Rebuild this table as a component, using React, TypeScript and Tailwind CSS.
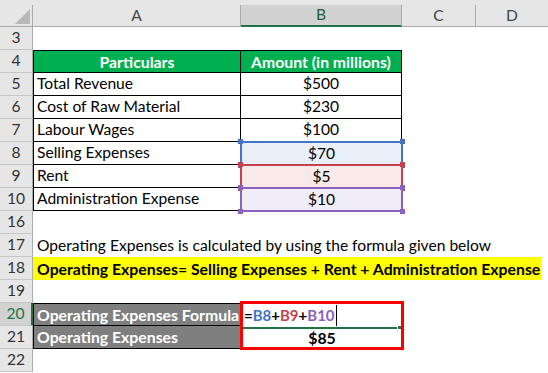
import React from 'react'

// rows shown in the sheet (11-15 are hidden)
const ROWS = [3, 4, 5, 6, 7, 8, 9, 10, 16, 17, 18, 19, 20, 21, 22]

const items = [
  { label: 'Total Revenue', value: '$500' },
  { label: 'Cost of Raw Material', value: '$230' },
  { label: 'Labour Wages', value: '$100' },
]

function Handle({ color, pos }: { color: string; pos: string }) {
  return <span className={`absolute w-[5px] h-[5px] ${pos}`} style={{ background: color }} />
}

// formula reference highlight on a B cell
function RefCell({ value, fill, stroke }: { value: string; fill: string; stroke: string }) {
  return (
    <div
      className="relative flex items-center justify-center outline-2 -outline-offset-1"
      style={{ background: fill, outlineColor: stroke }}
    >
      {value}
      <Handle color={stroke} pos="-top-[3px] -left-[3px]" />
      <Handle color={stroke} pos="-top-[3px] -right-[3px]" />
      <Handle color={stroke} pos="-bottom-[3px] -left-[3px]" />
      <Handle color={stroke} pos="-bottom-[3px] -right-[3px]" />
    </div>
  )
}

export default function App() {
  return (
    <div className="w-[548px] h-[373px] overflow-hidden bg-white font-[Lato,sans-serif] text-[15.6px] text-black leading-none">
      <div className="grid grid-cols-[33px_208px_161px_74px_72px] grid-rows-[27px_repeat(15,23px)]">
        {/* column headers */}
        <div className="bg-[#e6e6e6] border-b border-[#ababab] pt-[5px]">
          <div className="relative h-full border-r border-[#ababab]">
            <svg className="absolute left-[15px] top-[4px]" width="16" height="16" viewBox="0 0 16 16">
              <polygon points="15,0 15,15 0,15" fill="#b8b8b8" />
            </svg>
          </div>
        </div>
        <div className="bg-[#e6e6e6] border-b border-[#ababab] pt-[5px]">
          <div className="h-full border-r border-[#ababab] flex items-center justify-center text-[#444]">A</div>
        </div>
        <div className="bg-[#e6e6e6] pt-[5px]">
          <div className="h-full bg-[#d2d2d2] border-b-2 border-[#217346] border-r border-r-[#ababab] flex items-center justify-center text-[#1e5e3c]">
            B
          </div>
        </div>
        <div className="bg-[#e6e6e6] border-b border-[#ababab] pt-[5px]">
          <div className="h-full border-r border-[#ababab] flex items-center justify-center text-[#444]">C</div>
        </div>
        <div className="bg-[#e6e6e6] border-b border-[#ababab] pt-[5px]">
          <div className="h-full flex items-center justify-center text-[#444]">D</div>
        </div>

        {/* row headers */}
        {ROWS.map((n, i) => (
          <div
            key={n}
            style={{ gridRow: i + 2, gridColumn: 1 }}
            className={
              n === 20
                ? 'bg-[#d2d2d2] border-b border-[#c6c6c6] border-r-2 border-r-[#217346] flex items-center justify-center text-[#217346]'
                : 'bg-[#e6e6e6] border-b border-[#c6c6c6] border-r border-r-[#ababab] flex items-center justify-center text-[#333]'
            }
          >
            {n}
          </div>
        ))}

        {/* row 3 empty */}
        <div className="col-start-2 row-start-2 col-span-4" />

        {/* table header row 4 */}
        <div className="col-start-2 row-start-3 bg-[#00b050] border border-black flex items-center justify-center font-bold text-[15.8px] text-white">
          Particulars
        </div>
        <div className="col-start-3 row-start-3 bg-[#00b050] border-y border-r border-black flex items-center justify-center font-bold text-[15.8px] text-white whitespace-nowrap">
          Amount (in millions)
        </div>

        {items.map((it, i) => (
          <React.Fragment key={it.label}>
            <div style={{ gridRow: i + 4 }} className="col-start-2 border-x border-b border-black flex items-center pl-[3px]">
              {it.label}
            </div>
            <div style={{ gridRow: i + 4 }} className="col-start-3 border-r border-b border-black flex items-center justify-center">
              {it.value}
            </div>
          </React.Fragment>
        ))}

        <div className="col-start-2 row-start-7 border-x border-b border-black flex items-center pl-[3px]">Selling Expenses</div>
        <div className="col-start-2 row-start-8 border-x border-b border-black flex items-center pl-[3px]">Rent</div>
        <div className="col-start-2 row-start-9 border-x border-b border-black flex items-center pl-[3px]">Administration Expense</div>
        <div className="col-start-3 row-start-7 grid">
          <RefCell value="$70" fill="#e9eff9" stroke="#4472c4" />
        </div>
        <div className="col-start-3 row-start-8 grid">
          <RefCell value="$5" fill="#f9e9e9" stroke="#c4424f" />
        </div>
        <div className="col-start-3 row-start-9 grid">
          <RefCell value="$10" fill="#f1edf8" stroke="#8a62bd" />
        </div>

        {/* row 17 + 18 */}
        <div className="col-start-2 row-start-11 col-span-4 flex items-center pl-[4px] whitespace-nowrap">
          Operating Expenses is calculated by using the formula given below
        </div>
        <div className="col-start-2 row-start-12 col-span-4 flex">
          <div className="bg-[#ffff00] flex items-center pl-[4px] pr-[1px] font-bold text-[15.8px] whitespace-nowrap">
            Operating Expenses= Selling Expenses + Rent + Administration Expense
          </div>
        </div>

        {/* rows 20, 21 */}
        <div className="col-start-2 row-start-14 bg-[#7f7f7f] border border-black flex items-center pl-[3px] font-bold text-[15.8px] text-white whitespace-nowrap overflow-hidden">
          Operating Expenses Formula
        </div>
        <div className="col-start-2 row-start-15 bg-[#7f7f7f] border-x border-b border-black flex items-center pl-[3px] font-bold text-[15.8px] text-white">
          Operating Expenses
        </div>
        <div className="col-start-3 row-start-14 row-span-2 -mt-[2px] -ml-px -mr-[2px] -mb-px border-[3px] border-[#ff0000] flex flex-col font-bold">
          <div className="h-[22px] flex items-center pl-px text-[15px]">
            <span>=</span>
            <span className="text-[#4472c4]">B8</span>
            <span>+</span>
            <span className="text-[#c4424f]">B9</span>
            <span>+</span>
            <span className="text-[#8a62bd]">B10</span>
            <span className="w-px h-[21px] bg-black ml-px" />
          </div>
          <div className="flex items-center h-[3px]">
            <div className="flex-1 h-[2px] bg-[#217346]" />
            <div className="w-px" />
            <div className="w-[3px] h-[3px] bg-[#217346]" />
          </div>
          <div className="flex-1 flex items-center justify-center text-[15.8px]">$85</div>
        </div>
      </div>
    </div>
  )
}
